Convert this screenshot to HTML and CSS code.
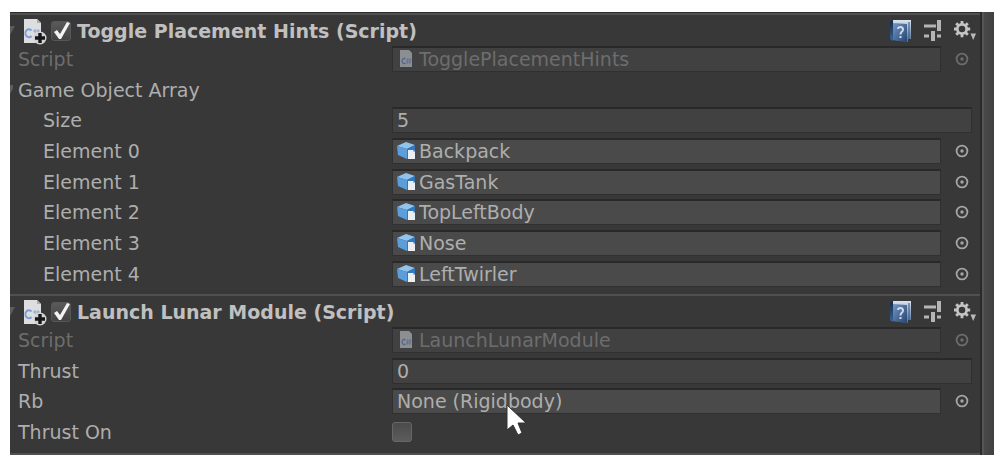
FILE: index.html
```html
<!DOCTYPE html>
<html lang="en">
<head>
<meta charset="utf-8">
<title>Inspector</title>
<meta name="viewport" content="width=device-width, initial-scale=1">
<link rel="stylesheet" href="styles.css">
</head>
<body>
<svg class="defs" aria-hidden="true">
  <defs>
    <linearGradient id="book-cover" x1="0" y1="0" x2="1" y2="1"><stop offset="0" stop-color="#7496c4"/><stop offset="1" stop-color="#254571"/></linearGradient>
    <linearGradient id="book-spine" x1="0" y1="0" x2="0" y2="1"><stop offset="0" stop-color="#142842"/><stop offset="1" stop-color="#39669b"/></linearGradient>
    <linearGradient id="book-pages" x1="0" y1="0" x2="0" y2="1"><stop offset="0" stop-color="#dce4ee"/><stop offset="1" stop-color="#4d6f9e"/></linearGradient>
  </defs>
  <symbol id="fold" viewBox="0 0 5 10"><path d="M0 0H5L0 9Z" fill="#5c5c5c"/></symbol>
  <symbol id="script-large" viewBox="0 0 24 26">
    <path d="M1 0H14L18 4V24H1Z" fill="#dcdedf"/><path d="M14 0L18 4H14Z" fill="#a9adb0"/>
    <path d="M8.500 11.500A3.500 4 0 1 0 8.500 17" fill="none" stroke="#7f9fd2" stroke-width="2"/>
    <path d="M12 10V14M15 10V14M10 12H17" stroke="#8aa6d2" stroke-width="1"/>
    <circle cx="17" cy="19" r="6.500" fill="#d2d2d2"/>
    <path d="M17 14V24M12 19H22" stroke="#171717" stroke-width="3.400"/>
  </symbol>
  <symbol id="script-small" viewBox="0 0 14 18">
    <path d="M1 0H10L13 3V17H1Z" fill="#8c8f92"/>
    <path d="M6.500 9A2.200 2.500 0 1 0 6.500 13" fill="none" stroke="#52658f" stroke-width="1.300"/>
    <path d="M9 8L8 14M11.500 8L10.500 14M7.500 10H12.500M7 12H12" stroke="#5d6d92" stroke-width=".8"/>
  </symbol>
  <symbol id="prefab" viewBox="0 0 20 18">
    <path d="M0 4L9 0L18 3L10 7Z" fill="#90c4ef"/><path d="M0 4L10 7V17L1 13Z" fill="#5c9edb"/><path d="M10 7L18 3V14L10 17Z" fill="#3478bc"/>
    <path d="M11 8H16L18 10V17H11Z" fill="#eceff2"/><path d="M16 8L18 10H16Z" fill="#b1bdc7"/>
  </symbol>
  <symbol id="check" viewBox="0 0 20 20"><path d="M3 11L6 9L9 13L16 1L19 2L10 18H8Z" fill="#f3f3f3"/></symbol>
  <symbol id="help" viewBox="0 0 22 22">
    <path d="M0 2L3 0V21L0 19Z" fill="url(#book-spine)"/><path d="M3 0H21V19H18V22L3 20Z" fill="url(#book-pages)"/>
    <path d="M3 3L17 4V22L3 20Z" fill="url(#book-cover)"/><path d="M19 2V19" stroke="#2c507e"/>
    <path d="M8 9Q8 7 10.500 7Q13 7 13 9.500Q13 11 11.500 12Q10.500 13 10.500 14.500M10.500 16V18" fill="none" stroke="#cad9ec" stroke-width="2"/>
  </symbol>
  <symbol id="sliders" viewBox="0 0 18 22">
    <path d="M0 6H12M0 16H5M13 16H17" stroke="#b5b5b5" stroke-width="3"/><path d="M15 0V11M9 11V21" stroke="#b5b5b5" stroke-width="4"/>
  </symbol>
  <symbol id="gear" viewBox="0 0 23 20">
    <g transform="translate(8 8)"><circle r="4.700" fill="none" stroke="#c4c4c4" stroke-width="2.800"/>
    <path d="M0-5V-8.200M0 5V8.200M-5 0H-8.200M5 0H8.200M3.500-3.500L5.800-5.800M3.500 3.500L5.800 5.800M-3.500-3.500L-5.800-5.800M-3.500 3.500L-5.800 5.800" stroke="#c4c4c4" stroke-width="2.800"/></g>
    <path d="M16.500 12.500H22L19.200 19Z" fill="#bababa"/>
  </symbol>
  <symbol id="target" viewBox="0 0 14 14"><circle cx="7" cy="7" r="5.400" fill="none" stroke="currentColor" stroke-width="1.800"/><circle cx="7" cy="7" r="1.700" fill="currentColor"/></symbol>
</svg>

<main class="inspector">
  <div class="components">
    <section class="component">
      <header class="component-header">
        <button class="icon-button fold" aria-label="Collapse"><svg><use href="#fold"/></svg></button>
        <svg class="script-icon" aria-hidden="true"><use href="#script-large"/></svg>
        <span class="tick"><input type="checkbox" id="hints-enabled" checked><svg aria-hidden="true"><use href="#check"/></svg></span>
        <label class="title" for="hints-enabled">Toggle Placement Hints (Script)</label>
        <button class="icon-button help" aria-label="Help"><svg><use href="#help"/></svg></button>
        <button class="icon-button sliders" aria-label="Presets"><svg><use href="#sliders"/></svg></button>
        <button class="icon-button gear" aria-label="Settings"><svg><use href="#gear"/></svg></button>
      </header>
      <div class="properties">
        <div class="row disabled">
          <label for="hints-script">Script</label>
          <div class="field"><svg class="script-small" aria-hidden="true"><use href="#script-small"/></svg><input id="hints-script" value="TogglePlacementHints" disabled></div>
          <button class="icon-button target" aria-label="Select script" disabled><svg><use href="#target"/></svg></button>
        </div>
        <div class="row group">
          <button class="icon-button fold" aria-label="Collapse array"><svg><use href="#fold"/></svg></button>
          <span>Game Object Array</span>
        </div>
        <div class="row nested">
          <label for="array-size">Size</label>
          <div class="field number"><input id="array-size" value="5"></div>
        </div>
        <div class="row nested">
          <label for="element-0">Element 0</label>
          <div class="field object"><svg class="prefab" aria-hidden="true"><use href="#prefab"/></svg><input id="element-0" value="Backpack" readonly></div>
          <button class="icon-button target" aria-label="Select element 0"><svg><use href="#target"/></svg></button>
        </div>
        <div class="row nested">
          <label for="element-1">Element 1</label>
          <div class="field object"><svg class="prefab" aria-hidden="true"><use href="#prefab"/></svg><input id="element-1" value="GasTank" readonly></div>
          <button class="icon-button target" aria-label="Select element 1"><svg><use href="#target"/></svg></button>
        </div>
        <div class="row nested">
          <label for="element-2">Element 2</label>
          <div class="field object"><svg class="prefab" aria-hidden="true"><use href="#prefab"/></svg><input id="element-2" value="TopLeftBody" readonly></div>
          <button class="icon-button target" aria-label="Select element 2"><svg><use href="#target"/></svg></button>
        </div>
        <div class="row nested">
          <label for="element-3">Element 3</label>
          <div class="field object"><svg class="prefab" aria-hidden="true"><use href="#prefab"/></svg><input id="element-3" value="Nose" readonly></div>
          <button class="icon-button target" aria-label="Select element 3"><svg><use href="#target"/></svg></button>
        </div>
        <div class="row nested">
          <label for="element-4">Element 4</label>
          <div class="field object"><svg class="prefab" aria-hidden="true"><use href="#prefab"/></svg><input id="element-4" value="LeftTwirler" readonly></div>
          <button class="icon-button target" aria-label="Select element 4"><svg><use href="#target"/></svg></button>
        </div>
      </div>
    </section>

    <section class="component">
      <header class="component-header">
        <button class="icon-button fold" aria-label="Collapse"><svg><use href="#fold"/></svg></button>
        <svg class="script-icon" aria-hidden="true"><use href="#script-large"/></svg>
        <span class="tick"><input type="checkbox" id="launch-enabled" checked><svg aria-hidden="true"><use href="#check"/></svg></span>
        <label class="title" for="launch-enabled">Launch Lunar Module (Script)</label>
        <button class="icon-button help" aria-label="Help"><svg><use href="#help"/></svg></button>
        <button class="icon-button sliders" aria-label="Presets"><svg><use href="#sliders"/></svg></button>
        <button class="icon-button gear" aria-label="Settings"><svg><use href="#gear"/></svg></button>
      </header>
      <div class="properties">
        <div class="row disabled">
          <label for="launch-script">Script</label>
          <div class="field"><svg class="script-small" aria-hidden="true"><use href="#script-small"/></svg><input id="launch-script" value="LaunchLunarModule" disabled></div>
          <button class="icon-button target" aria-label="Select script" disabled><svg><use href="#target"/></svg></button>
        </div>
        <div class="row">
          <label for="thrust">Thrust</label>
          <div class="field number"><input id="thrust" value="0"></div>
        </div>
        <div class="row">
          <label for="rb">Rb</label>
          <div class="field object"><input id="rb" value="None (Rigidbody)" readonly>
            <svg class="pointer" viewBox="0 0 22 32" aria-hidden="true"><path d="M1 1V26L7 21L12 31L16 29L12 19H20Z" fill="#fff" stroke="#333" stroke-width="1"/></svg>
          </div>
          <button class="icon-button target" aria-label="Select rigidbody"><svg><use href="#target"/></svg></button>
        </div>
        <div class="row">
          <label for="thrust-on">Thrust On</label>
          <span class="tick"><input type="checkbox" id="thrust-on"></span>
        </div>
      </div>
    </section>
  </div>
  <div class="scroll-track"></div>
</main>
</body>
</html>
```

FILE: styles.css
```css
* { box-sizing: border-box; }
body {
  margin: 0;
  padding: 12px 13px 5px 10px;
  background: #fff;
  color: #aeaeae;
  font: 19px/26px "DejaVu Sans", Verdana, sans-serif;
}
.defs { position: absolute; width: 0; height: 0; }
svg { display: block; flex: none; }
button, input { font: inherit; color: inherit; }

.inspector {
  display: grid;
  grid-template-columns: minmax(0, 1fr) 14px;
  background: #383838;
}
.components { border-top: 1px solid #2c2c2c; border-bottom: 2px solid #505050; }
.scroll-track {
  border-left: 2px solid #2a2a2a;
  background: linear-gradient(90deg, #555 0 2px, #494949 2px, #404040);
}

.component { border-top: 2px solid #505050; }
.component-header {
  display: flex;
  align-items: center;
  height: 31px;
  padding-right: 3px;
}
.title {
  flex: 1;
  min-width: 0;
  padding-left: 6px;
  color: #c0c0c0;
  font-weight: bold;
  white-space: nowrap;
}
.icon-button {
  display: block;
  flex: none;
  margin: 0;
  padding: 0;
  border: 0;
  background: none;
}
.fold, .fold svg { width: 5px; height: 10px; }
.script-icon { width: 24px; height: 26px; margin: 3px 4px 0 8px; }
.help, .help svg { width: 22px; height: 22px; }
.sliders { margin: 0 12px; }
.sliders, .sliders svg { width: 18px; height: 22px; }
.gear, .gear svg { width: 23px; height: 20px; }

.tick { display: grid; width: 20px; height: 20px; }
.tick > * { grid-area: 1 / 1; width: 20px; height: 20px; }
.tick input {
  appearance: none;
  margin: 0;
  border: 1px solid #666;
  border-radius: 3px;
  background: linear-gradient(#4b4b4b, #5c5c5c);
}
.tick svg { pointer-events: none; }
.tick input:checked { border-color: #575757; background: linear-gradient(#5a5a5a, #434343); }
.tick input:not(:checked) + svg { visibility: hidden; }

.properties {
  display: grid;
  grid-auto-rows: 31px 30px 31px;
  padding-bottom: 3px;
}
.row {
  display: grid;
  grid-template-columns: 374px minmax(0, 1fr) 39px;
  align-items: center;
  height: 26px;
  padding-left: 8px;
}
.nested > label { padding-left: 25px; }
.group { display: flex; gap: 5px; padding-left: 0; }
.group .fold { width: 3px; overflow: hidden; }
.field {
  position: relative;
  display: flex;
  align-items: center;
  height: 26px;
  padding: 0 4px 1px;
  border: 1px solid #303030;
  border-top: 2px solid #292929;
  background: #414141;
}
.field input {
  flex: 1;
  min-width: 0;
  height: 22px;
  margin: 0;
  padding: 0;
  border: 0;
  outline: 0;
  background: none;
}
.object { background: #4a4a4a; }
.number { grid-column: 2 / 4; margin-right: 8px; }
.disabled, .disabled input { color: #6d6d6d; }
.script-small { width: 14px; height: 18px; margin: 0 6px 0 2px; }
.prefab { width: 20px; height: 18px; margin-right: 2px; }
.target { margin-left: 14px; color: #a5a5a5; }
.target, .target svg { width: 14px; height: 14px; }
.disabled .target { color: #6d6d6d; }
.pointer {
  position: absolute;
  top: 14px;
  left: 113px;
  z-index: 1;
  width: 22px;
  height: 32px;
}
```
